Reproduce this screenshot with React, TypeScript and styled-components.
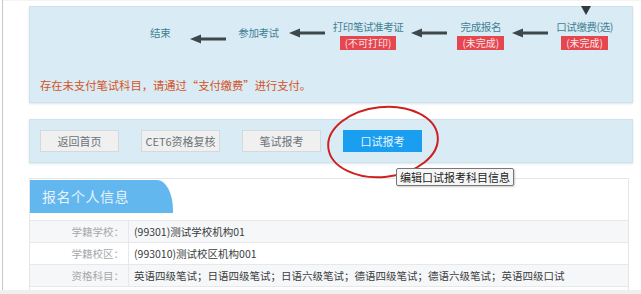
import React from "react";
import styled, { createGlobalStyle } from "styled-components";

const Global = createGlobalStyle`
  html, body { margin: 0; padding: 0; background: #fff; }
  body { font-family: "Noto Sans CJK SC", "Noto Sans", sans-serif; }
  * { box-sizing: border-box; }
`;

const Page = styled.div`
  width: 641px;
  height: 294px;
  overflow: hidden;
  position: relative;
  padding-left: 2px;
  background: linear-gradient(#fff 0 290px, #f0f0f0 290px);
`;

const Frame = styled.div`
  border-left: 1px solid #c9c9c9;
  height: 290px;
  padding-left: 26px;
  padding-top: 6px;
  box-shadow: inset 0 1px 0 #f4f4f4;
`;

const Panel = styled.div<{ $h: number; $mt?: number }>`
  position: relative;
  width: 604px;
  height: ${(p) => p.$h}px;
  margin-top: ${(p) => p.$mt ?? 0}px;
  background: #d9ebf4;
  border: 1px solid #d0e3ed;
  box-shadow: 0 1px 2px rgba(120, 150, 170, 0.25);
`;

const FlowRow = styled.div`
  display: flex;
  justify-content: flex-end;
  align-items: flex-start;
  gap: 8px;
  padding-right: 19px;
  margin-top: 14px;
  height: 30px;
`;

const Step = styled.div<{ $single?: boolean; $ml?: number; $mr?: number }>`
  position: relative;
  display: flex;
  flex-direction: column;
  align-items: center;
  margin-top: ${(p) => (p.$single ? 6 : 0)}px;
  margin-left: ${(p) => p.$ml ?? 0}px;
  margin-right: ${(p) => p.$mr ?? 0}px;
`;

const StepLabel = styled.div`
  font-size: 10.5px;
  line-height: 12px;
  color: #3f7f93;
  white-space: nowrap;
  letter-spacing: -0.4px;
`;

const Badge = styled.div`
  margin-top: 3px;
  height: 14px;
  line-height: 14px;
  padding: 0 5px;
  background: #e5464f;
  color: #fbe3e4;
  font-size: 10px;
  white-space: nowrap;
`;

const DownMark = styled.svg`
  position: absolute;
  top: -15px;
  left: 50%;
  margin-left: -4px;
`;

const ArrowIcon = styled.svg`
  margin-top: 7px;
  flex: none;
`;

const Message = styled.div`
  margin-top: 28px;
  padding-left: 10px;
  font-size: 11.3px;
  line-height: 12px;
  color: #d4531f;
  white-space: nowrap;
`;

const ButtonRow = styled.div`
  display: flex;
  gap: 22px;
  padding: 10px 0 0 10px;
`;

const NavButton = styled.div<{ $active?: boolean }>`
  width: 79px;
  height: 22px;
  line-height: 20px;
  text-align: center;
  font-size: 11px;
  white-space: nowrap;
  background: ${(p) => (p.$active ? "#1a9ef0" : "#f0f0f0")};
  color: ${(p) => (p.$active ? "#e6f4fe" : "#6d7378")};
  border: 1px solid ${(p) => (p.$active ? "#1a9ef0" : "#d6d9dc")};
`;

const Circle = styled.svg`
  position: absolute;
  left: 294px;
  top: -17px;
`;

const Tooltip = styled.div`
  position: absolute;
  left: 366px;
  top: 48px;
  height: 18px;
  padding: 0 3px;
  line-height: 16px;
  font-size: 11px;
  color: #222;
  background: #f6f6f6;
  border: 1px solid #777;
  border-radius: 2px;
  white-space: nowrap;
  box-shadow: 1px 1px 2px rgba(0, 0, 0, 0.2);
`;

const Card = styled.div`
  width: 600px;
  height: 112px;
  margin-top: 15px;
  background: #fff;
  border: 1px solid #e4e7ea;
  border-bottom: 0;
  padding-top: 1px;
`;

const Tab = styled.div`
  width: 143px;
  height: 33px;
  background: #62b7ee;
  border-top-right-radius: 16px 30px;
  color: #e8f4fc;
  font-size: 14px;
  line-height: 33px;
  padding-left: 12px;
  letter-spacing: 0.5px;
`;

const Table = styled.div`
  margin-top: 7px;
  border-top: 1px solid #e6e8ea;
`;

const Row = styled.div<{ $shade?: boolean }>`
  display: grid;
  grid-template-columns: 99px 1fr;
  height: 22px;
  border-bottom: 1px solid #e6e8ea;
  background: ${(p) => (p.$shade ? "#f6f7f8" : "#fff")};
`;

const Label = styled.div`
  text-align: right;
  padding-right: 4px;
  font-size: 10.5px;
  line-height: 21px;
  color: #a5a8ab;
  border-right: 1px solid #e6e8ea;
  white-space: nowrap;
`;

const Value = styled.div`
  padding-left: 5px;
  font-size: 10.5px;
  line-height: 21px;
  color: #3a3d40;
  white-space: nowrap;
`;

const Arrow = () => (
  <ArrowIcon width="36" height="10" viewBox="0 0 36 10">
    <path d="M0 5 L11 0.5 L11 3.5 L36 3.5 L36 6.5 L11 6.5 L11 9.5 Z" fill="#3e484b" />
  </ArrowIcon>
);

const rows = [
  { label: "学籍学校：", value: "(99301)测试学校机构01", shade: true },
  { label: "学籍校区：", value: "(993010)测试校区机构001", shade: false },
  {
    label: "资格科目：",
    value: "英语四级笔试；日语四级笔试；日语六级笔试；德语四级笔试；德语六级笔试；英语四级口试",
    shade: true,
  },
];

export default function App() {
  return (
    <Page>
      <Global />
      <Frame>
        <Panel $h={97}>
          <FlowRow>
            <Step $single>
              <StepLabel>结束</StepLabel>
            </Step>
            <Step $single $ml={12}>
              <Arrow />
            </Step>
            <Step $single $ml={4} $mr={2}>
              <StepLabel>参加考试</StepLabel>
            </Step>
            <Arrow />
            <Step>
              <StepLabel>打印笔试准考证</StepLabel>
              <Badge>(不可打印)</Badge>
            </Step>
            <Arrow />
            <Step $ml={2}>
              <StepLabel>完成报名</StepLabel>
              <Badge>(未完成)</Badge>
            </Step>
            <Arrow />
            <Step>
              <DownMark width="10" height="9" viewBox="0 0 10 9">
                <path d="M0 0 L10 0 L5 9 Z" fill="#333a3d" />
              </DownMark>
              <StepLabel>口试缴费(选)</StepLabel>
              <Badge>(未完成)</Badge>
            </Step>
          </FlowRow>
          <Message>存在未支付笔试科目，请通过“支付缴费”进行支付。</Message>
        </Panel>
        <Panel $h={44} $mt={16}>
          <ButtonRow>
            <NavButton>返回首页</NavButton>
            <NavButton>CET6资格复核</NavButton>
            <NavButton>笔试报考</NavButton>
            <NavButton $active>口试报考</NavButton>
          </ButtonRow>
          <Circle width="118" height="78" viewBox="0 0 118 78">
            <ellipse
              cx="59"
              cy="39"
              rx="55"
              ry="35"
              transform="rotate(-6 59 39)"
              fill="none"
              stroke="#cf2020"
              strokeWidth="2"
            />
          </Circle>
          <Tooltip>编辑口试报考科目信息</Tooltip>
        </Panel>
        <Card>
          <Tab>报名个人信息</Tab>
          <Table>
            {rows.map((r) => (
              <Row key={r.label} $shade={r.shade}>
                <Label>{r.label}</Label>
                <Value>{r.value}</Value>
              </Row>
            ))}
          </Table>
        </Card>
      </Frame>
    </Page>
  );
}
